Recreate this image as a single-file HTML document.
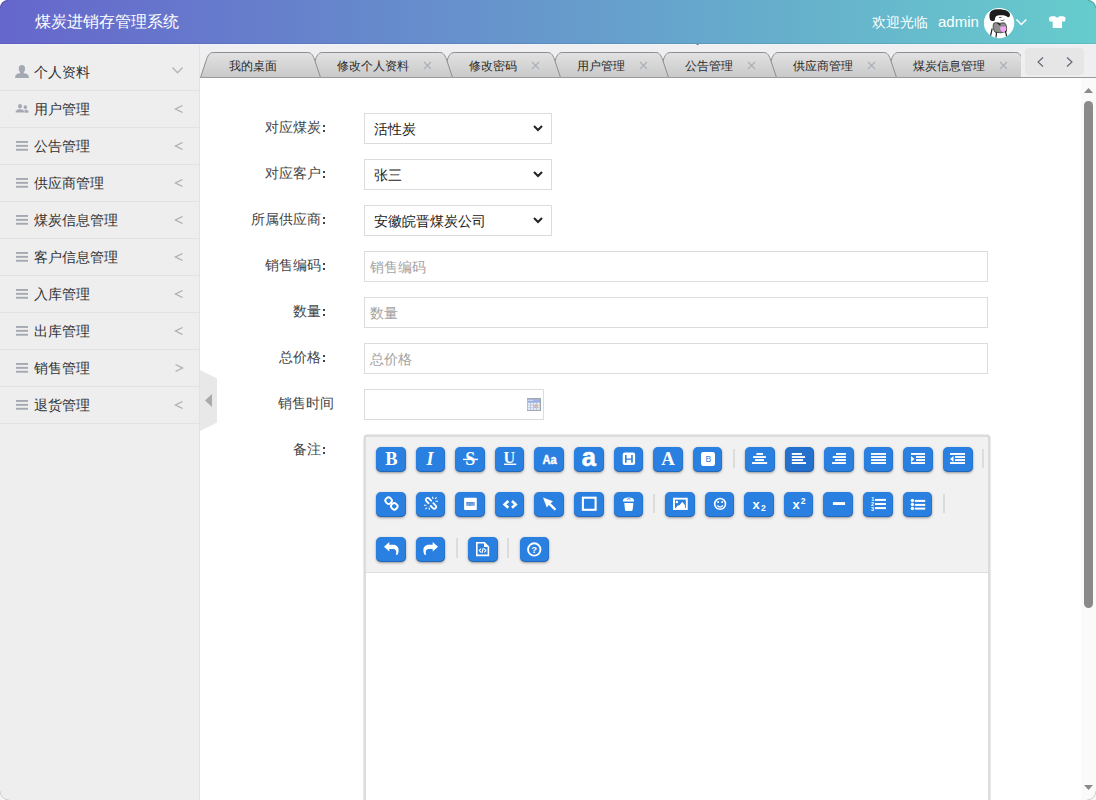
<!DOCTYPE html><html><head><meta charset="utf-8"><style>
*{margin:0;padding:0;box-sizing:border-box}
html,body{width:1096px;height:800px;overflow:hidden;background:#fff;font-family:"Liberation Sans",sans-serif}
.a{position:absolute;white-space:nowrap;line-height:1}
svg{position:absolute;overflow:visible}
</style></head><body>
<div class="a" style="left:0;top:0;width:1096px;height:44px;background:linear-gradient(to right,#6666cc,#66cccc);border-radius:8px 8px 0 0"></div>
<div class="a" style="left:35px;top:14px;font-size:16px;color:#fff">煤炭进销存管理系统</div>
<div class="a" style="left:872px;top:15px;font-size:14px;color:#fff">欢迎光临</div>
<div class="a" style="left:938px;top:14px;font-size:15px;color:#fff">admin</div>
<svg style="left:984px;top:8px" width="30" height="30" viewBox="0 0 30 30"><circle cx="15.1" cy="15.1" r="15.2" fill="#fff"/><path d="M6 11.5 C4.5 6 6 1.5 13 1.3 C20 1 26.5 3 26 7.5 C25.8 9 24.5 9.5 23.5 9 C22.5 7.5 19 7 15 7.3 C12 7.5 11 9 10.8 12 C10.5 13.5 7 13.5 6 11.5 Z" fill="#1c1c1c"/><path d="M15 9.6 L17.6 9.3 M16.6 12.2 C18 12.9 19.3 12.6 20.3 11.6" stroke="#444" stroke-width="0.9" fill="none"/><path d="M9.8 15.2 C11 14.4 13 14.6 14.8 15.3 L20.5 14.8 C22.3 16.2 23 19.5 22.4 23.4 L17 24.8 L11 24.2 C9 21.2 8.6 17.6 9.8 15.2 Z" fill="#8e8e8e" stroke="#222" stroke-width="0.7"/><path d="M16.4 18.6 C18.4 19.1 20.6 18 21.9 19.1 C22.6 21.1 22.1 23.6 20.5 24.1 C18.5 24.4 16.8 23.4 16.2 21.1 Z" fill="#f2a4f2"/><path d="M8.2 20.5 L6.6 27.6 M12.6 24.3 L12 29.5 M21.4 23 L22.6 28.2 M13.5 14.8 L16.5 17.2" stroke="#1c1c1c" stroke-width="1.2" fill="none"/></svg>
<svg style="left:1016px;top:18.8px" width="11" height="6.5" viewBox="0 0 11 6.5"><path d="M0.5 0.5 L5.3 5.5 L10.3 0.5" fill="none" stroke="#fff" stroke-width="1.5"/></svg>
<svg style="left:0;top:0" width="1096" height="44" viewBox="0 0 1096 44"><path d="M1048.8 18.5 Q1049 16.8 1051.5 16.3 L1055 16.3 Q1057.2 18.8 1059.4 16.3 L1063 16.3 Q1065.6 16.8 1065.6 18.5 L1065 21.4 L1062 21.4 L1062 28 L1052.7 28 L1052.7 21.4 L1049.5 21.4 Z" fill="#fff"/></svg>
<div class="a" style="left:0;top:44px;width:199px;height:756px;background:#eeeeee"></div>
<div class="a" style="left:199px;top:44px;width:1px;height:756px;background:#e2e2e2"></div>
<div class="a" style="left:0;top:90px;width:199px;height:1px;background:#e2e2e2"></div>
<div class="a" style="left:34px;top:65px;font-size:14px;color:#333">个人资料</div>
<svg style="left:0;top:0" width="40" height="90" viewBox="0 0 40 90"><ellipse cx="21.9" cy="68.7" rx="3.15" ry="3.75" fill="#a3a8b2"/><rect x="20" y="71" width="3.8" height="2.8" fill="#a3a8b2"/><path d="M15.2 78.1 L15.2 76.8 Q15.4 73.9 19.2 73.3 L24.6 73.3 Q28.6 73.9 28.8 76.8 L28.8 78.1 Z" fill="#a3a8b2"/></svg>
<svg style="left:172px;top:67px" width="11" height="7" viewBox="0 0 11 7"><path d="M0.5 0.5 L5.5 5.8 L10.5 0.5" fill="none" stroke="#b4b4b4" stroke-width="1.3"/></svg>
<div class="a" style="left:0;top:127px;width:199px;height:1px;background:#e2e2e2"></div>
<div class="a" style="left:34px;top:102px;font-size:14px;color:#333">用户管理</div>
<svg style="left:0;top:0" width="40" height="120" viewBox="0 0 40 120"><ellipse cx="25.3" cy="107.1" rx="1.75" ry="1.95" fill="#a3a8b2"/><path d="M24.2 112.8 L24.2 111.3 Q24.5 109.6 25.3 109.4 Q27.9 109.6 28.3 111.3 L28.3 112.8 Z" fill="#a3a8b2"/><ellipse cx="20" cy="106.2" rx="2" ry="2.3" fill="#eeeeee" stroke="#eeeeee" stroke-width="0.8"/><ellipse cx="20" cy="106.2" rx="1.95" ry="2.25" fill="#a3a8b2"/><path d="M15.6 112.8 L15.6 111.5 Q15.8 109.4 19 109.1 L21 109.1 Q24.2 109.4 24.4 111.5 L24.4 112.8 Z" fill="#a3a8b2" stroke="#eeeeee" stroke-width="0.5"/></svg>
<svg style="left:175px;top:105px" width="8" height="8" viewBox="0 0 8 8"><path d="M7.5 0.5 L0.5 4 L7.5 7.5" fill="none" stroke="#adadad" stroke-width="1.35"/></svg>
<div class="a" style="left:0;top:164px;width:199px;height:1px;background:#e2e2e2"></div>
<div class="a" style="left:34px;top:139px;font-size:14px;color:#333">公告管理</div>
<svg style="left:16px;top:141px" width="12" height="10" viewBox="0 0 12 10"><rect x="0" y="0" width="12" height="1.9" fill="#a3a8b2"/><rect x="0" y="3.9" width="12" height="1.9" fill="#a3a8b2"/><rect x="0" y="7.8" width="12" height="1.9" fill="#a3a8b2"/></svg>
<svg style="left:175px;top:142px" width="8" height="8" viewBox="0 0 8 8"><path d="M7.5 0.5 L0.5 4 L7.5 7.5" fill="none" stroke="#adadad" stroke-width="1.35"/></svg>
<div class="a" style="left:0;top:201px;width:199px;height:1px;background:#e2e2e2"></div>
<div class="a" style="left:34px;top:176px;font-size:14px;color:#333">供应商管理</div>
<svg style="left:16px;top:178px" width="12" height="10" viewBox="0 0 12 10"><rect x="0" y="0" width="12" height="1.9" fill="#a3a8b2"/><rect x="0" y="3.9" width="12" height="1.9" fill="#a3a8b2"/><rect x="0" y="7.8" width="12" height="1.9" fill="#a3a8b2"/></svg>
<svg style="left:175px;top:179px" width="8" height="8" viewBox="0 0 8 8"><path d="M7.5 0.5 L0.5 4 L7.5 7.5" fill="none" stroke="#adadad" stroke-width="1.35"/></svg>
<div class="a" style="left:0;top:238px;width:199px;height:1px;background:#e2e2e2"></div>
<div class="a" style="left:34px;top:213px;font-size:14px;color:#333">煤炭信息管理</div>
<svg style="left:16px;top:215px" width="12" height="10" viewBox="0 0 12 10"><rect x="0" y="0" width="12" height="1.9" fill="#a3a8b2"/><rect x="0" y="3.9" width="12" height="1.9" fill="#a3a8b2"/><rect x="0" y="7.8" width="12" height="1.9" fill="#a3a8b2"/></svg>
<svg style="left:175px;top:216px" width="8" height="8" viewBox="0 0 8 8"><path d="M7.5 0.5 L0.5 4 L7.5 7.5" fill="none" stroke="#adadad" stroke-width="1.35"/></svg>
<div class="a" style="left:0;top:275px;width:199px;height:1px;background:#e2e2e2"></div>
<div class="a" style="left:34px;top:250px;font-size:14px;color:#333">客户信息管理</div>
<svg style="left:16px;top:252px" width="12" height="10" viewBox="0 0 12 10"><rect x="0" y="0" width="12" height="1.9" fill="#a3a8b2"/><rect x="0" y="3.9" width="12" height="1.9" fill="#a3a8b2"/><rect x="0" y="7.8" width="12" height="1.9" fill="#a3a8b2"/></svg>
<svg style="left:175px;top:253px" width="8" height="8" viewBox="0 0 8 8"><path d="M7.5 0.5 L0.5 4 L7.5 7.5" fill="none" stroke="#adadad" stroke-width="1.35"/></svg>
<div class="a" style="left:0;top:312px;width:199px;height:1px;background:#e2e2e2"></div>
<div class="a" style="left:34px;top:287px;font-size:14px;color:#333">入库管理</div>
<svg style="left:16px;top:289px" width="12" height="10" viewBox="0 0 12 10"><rect x="0" y="0" width="12" height="1.9" fill="#a3a8b2"/><rect x="0" y="3.9" width="12" height="1.9" fill="#a3a8b2"/><rect x="0" y="7.8" width="12" height="1.9" fill="#a3a8b2"/></svg>
<svg style="left:175px;top:290px" width="8" height="8" viewBox="0 0 8 8"><path d="M7.5 0.5 L0.5 4 L7.5 7.5" fill="none" stroke="#adadad" stroke-width="1.35"/></svg>
<div class="a" style="left:0;top:349px;width:199px;height:1px;background:#e2e2e2"></div>
<div class="a" style="left:34px;top:324px;font-size:14px;color:#333">出库管理</div>
<svg style="left:16px;top:326px" width="12" height="10" viewBox="0 0 12 10"><rect x="0" y="0" width="12" height="1.9" fill="#a3a8b2"/><rect x="0" y="3.9" width="12" height="1.9" fill="#a3a8b2"/><rect x="0" y="7.8" width="12" height="1.9" fill="#a3a8b2"/></svg>
<svg style="left:175px;top:327px" width="8" height="8" viewBox="0 0 8 8"><path d="M7.5 0.5 L0.5 4 L7.5 7.5" fill="none" stroke="#adadad" stroke-width="1.35"/></svg>
<div class="a" style="left:0;top:386px;width:199px;height:1px;background:#e2e2e2"></div>
<div class="a" style="left:34px;top:361px;font-size:14px;color:#333">销售管理</div>
<svg style="left:16px;top:363px" width="12" height="10" viewBox="0 0 12 10"><rect x="0" y="0" width="12" height="1.9" fill="#a3a8b2"/><rect x="0" y="3.9" width="12" height="1.9" fill="#a3a8b2"/><rect x="0" y="7.8" width="12" height="1.9" fill="#a3a8b2"/></svg>
<svg style="left:175px;top:364px" width="8" height="8" viewBox="0 0 8 8"><path d="M0.5 0.5 L7.5 4 L0.5 7.5" fill="none" stroke="#adadad" stroke-width="1.35"/></svg>
<div class="a" style="left:0;top:423px;width:199px;height:1px;background:#e2e2e2"></div>
<div class="a" style="left:34px;top:398px;font-size:14px;color:#333">退货管理</div>
<svg style="left:16px;top:400px" width="12" height="10" viewBox="0 0 12 10"><rect x="0" y="0" width="12" height="1.9" fill="#a3a8b2"/><rect x="0" y="3.9" width="12" height="1.9" fill="#a3a8b2"/><rect x="0" y="7.8" width="12" height="1.9" fill="#a3a8b2"/></svg>
<svg style="left:175px;top:401px" width="8" height="8" viewBox="0 0 8 8"><path d="M7.5 0.5 L0.5 4 L7.5 7.5" fill="none" stroke="#adadad" stroke-width="1.35"/></svg>
<div class="a" style="left:200px;top:44px;width:896px;height:34px;background:#efeff1"></div>
<div class="a" style="left:0;top:43px;width:1096px;height:1px;background:rgba(30,30,60,.1)"></div>
<div class="a" style="left:0;top:44px;width:1096px;height:1px;background:#eef3fc"></div>
<svg style="left:0;top:0" width="1096" height="100" viewBox="0 0 1096 100"><defs><linearGradient id="tg" x1="0" y1="0" x2="0" y2="1"><stop offset="0" stop-color="#e2e2e2"/><stop offset="1" stop-color="#c9c9c9"/></linearGradient><clipPath id="tc"><rect x="200" y="40" width="821" height="40"/></clipPath></defs><g clip-path="url(#tc)"><path d="M885.5 77.5 L891 61 C892.6 55.6 894.6 52.5 898.2 52.5 L1015.8 52.5 C1019.4 52.5 1021.4 55.6 1023 61 L1028.5 77.5 Z" fill="url(#tg)" stroke="#8e8e8e" stroke-width="1"/><path d="M765.5 77.5 L771 61 C772.6 55.6 774.6 52.5 778.2 52.5 L883.8 52.5 C887.4 52.5 889.4 55.6 891 61 L896.5 77.5 Z" fill="url(#tg)" stroke="#8e8e8e" stroke-width="1"/><path d="M657.5 77.5 L663 61 C664.6 55.6 666.6 52.5 670.2 52.5 L763.8 52.5 C767.4 52.5 769.4 55.6 771 61 L776.5 77.5 Z" fill="url(#tg)" stroke="#8e8e8e" stroke-width="1"/><path d="M549.5 77.5 L555 61 C556.6 55.6 558.6 52.5 562.2 52.5 L655.8 52.5 C659.4 52.5 661.4 55.6 663 61 L668.5 77.5 Z" fill="url(#tg)" stroke="#8e8e8e" stroke-width="1"/><path d="M441.5 77.5 L447 61 C448.6 55.6 450.6 52.5 454.2 52.5 L547.8 52.5 C551.4 52.5 553.4 55.6 555 61 L560.5 77.5 Z" fill="url(#tg)" stroke="#8e8e8e" stroke-width="1"/><path d="M309.5 77.5 L315 61 C316.6 55.6 318.6 52.5 322.2 52.5 L439.8 52.5 C443.4 52.5 445.4 55.6 447 61 L452.5 77.5 Z" fill="url(#tg)" stroke="#8e8e8e" stroke-width="1"/><path d="M200.5 77.5 L206 61 C207.6 55.6 209.6 52.5 213.2 52.5 L307.8 52.5 C311.4 52.5 313.4 55.6 315 61 L320.5 77.5 Z" fill="url(#tg)" stroke="#8e8e8e" stroke-width="1"/></g></svg>
<div class="a" style="left:200px;top:77px;width:896px;height:1px;background:#9a9a9a"></div>
<svg style="left:694px;top:43px" width="7" height="4" viewBox="0 0 7 4"><path d="M2 1 L5.2 1 L3.6 2.3 Z" fill="#5d7c92"/></svg>
<div class="a" style="left:229px;top:59.5px;font-size:12px;color:#2a2a2a">我的桌面</div>
<div class="a" style="left:337px;top:59.5px;font-size:12px;color:#2a2a2a">修改个人资料</div>
<svg style="left:424px;top:62px" width="7" height="7" viewBox="0 0 7 7"><path d="M0 0 L7 7 M7 0 L0 7" stroke="#abb0b8" stroke-width="1.15"/></svg>
<div class="a" style="left:469px;top:59.5px;font-size:12px;color:#2a2a2a">修改密码</div>
<svg style="left:532px;top:62px" width="7" height="7" viewBox="0 0 7 7"><path d="M0 0 L7 7 M7 0 L0 7" stroke="#abb0b8" stroke-width="1.15"/></svg>
<div class="a" style="left:577px;top:59.5px;font-size:12px;color:#2a2a2a">用户管理</div>
<svg style="left:640px;top:62px" width="7" height="7" viewBox="0 0 7 7"><path d="M0 0 L7 7 M7 0 L0 7" stroke="#abb0b8" stroke-width="1.15"/></svg>
<div class="a" style="left:685px;top:59.5px;font-size:12px;color:#2a2a2a">公告管理</div>
<svg style="left:748px;top:62px" width="7" height="7" viewBox="0 0 7 7"><path d="M0 0 L7 7 M7 0 L0 7" stroke="#abb0b8" stroke-width="1.15"/></svg>
<div class="a" style="left:793px;top:59.5px;font-size:12px;color:#2a2a2a">供应商管理</div>
<svg style="left:868px;top:62px" width="7" height="7" viewBox="0 0 7 7"><path d="M0 0 L7 7 M7 0 L0 7" stroke="#abb0b8" stroke-width="1.15"/></svg>
<div class="a" style="left:913px;top:59.5px;font-size:12px;color:#2a2a2a">煤炭信息管理</div>
<svg style="left:1000px;top:62px" width="7" height="7" viewBox="0 0 7 7"><path d="M0 0 L7 7 M7 0 L0 7" stroke="#abb0b8" stroke-width="1.15"/></svg>
<div class="a" style="left:1025px;top:48px;width:59px;height:27px;background:#e6e6e6;border-radius:4px"></div>
<svg style="left:1037px;top:57px" width="7" height="10" viewBox="0 0 7 10"><path d="M6 0.5 L1 5 L6 9.5" fill="none" stroke="#5f6470" stroke-width="1.1"/></svg>
<svg style="left:1066px;top:57px" width="7" height="10" viewBox="0 0 7 10"><path d="M1 0.5 L6 5 L1 9.5" fill="none" stroke="#5f6470" stroke-width="1.1"/></svg>
<svg style="left:200px;top:370px" width="18" height="62" viewBox="0 0 18 62"><path d="M0 0 L17 8.5 L17 52.5 L0 61Z" fill="#e8e8e8"/><path d="M12 24 L5 30.5 L12 37Z" fill="#aaa"/></svg>
<div class="a" style="right:775.5px;top:120px;font-size:14px;color:#444">对应煤炭</div>
<div class="a" style="left:322.6px;top:124.6px;width:2.4px;height:2.2px;background:#444"></div>
<div class="a" style="left:322.6px;top:130px;width:2.4px;height:2.2px;background:#444"></div>
<div class="a" style="right:775.5px;top:166px;font-size:14px;color:#444">对应客户</div>
<div class="a" style="left:322.6px;top:170.6px;width:2.4px;height:2.2px;background:#444"></div>
<div class="a" style="left:322.6px;top:176px;width:2.4px;height:2.2px;background:#444"></div>
<div class="a" style="right:775.5px;top:212px;font-size:14px;color:#444">所属供应商</div>
<div class="a" style="left:322.6px;top:216.6px;width:2.4px;height:2.2px;background:#444"></div>
<div class="a" style="left:322.6px;top:222px;width:2.4px;height:2.2px;background:#444"></div>
<div class="a" style="right:775.5px;top:258px;font-size:14px;color:#444">销售编码</div>
<div class="a" style="left:322.6px;top:262.6px;width:2.4px;height:2.2px;background:#444"></div>
<div class="a" style="left:322.6px;top:268px;width:2.4px;height:2.2px;background:#444"></div>
<div class="a" style="right:775.5px;top:304px;font-size:14px;color:#444">数量</div>
<div class="a" style="left:322.6px;top:308.6px;width:2.4px;height:2.2px;background:#444"></div>
<div class="a" style="left:322.6px;top:314px;width:2.4px;height:2.2px;background:#444"></div>
<div class="a" style="right:775.5px;top:350px;font-size:14px;color:#444">总价格</div>
<div class="a" style="left:322.6px;top:354.6px;width:2.4px;height:2.2px;background:#444"></div>
<div class="a" style="left:322.6px;top:360px;width:2.4px;height:2.2px;background:#444"></div>
<div class="a" style="right:762px;top:396px;font-size:14px;color:#444">销售时间</div>
<div class="a" style="right:775.5px;top:442px;font-size:14px;color:#444">备注</div>
<div class="a" style="left:322.6px;top:446.6px;width:2.4px;height:2.2px;background:#444"></div>
<div class="a" style="left:322.6px;top:452px;width:2.4px;height:2.2px;background:#444"></div>
<div class="a" style="left:364px;top:113px;width:188px;height:31px;border:1px solid #dcdcdc;background:#fff"></div>
<div class="a" style="left:374px;top:122px;font-size:14px;color:#222">活性炭</div>
<svg style="left:533px;top:125px" width="10" height="6" viewBox="0 0 10 6"><path d="M1 1 L5 5 L9 1" fill="none" stroke="#222" stroke-width="2"/></svg>
<div class="a" style="left:364px;top:159px;width:188px;height:31px;border:1px solid #dcdcdc;background:#fff"></div>
<div class="a" style="left:374px;top:168px;font-size:14px;color:#222">张三</div>
<svg style="left:533px;top:171px" width="10" height="6" viewBox="0 0 10 6"><path d="M1 1 L5 5 L9 1" fill="none" stroke="#222" stroke-width="2"/></svg>
<div class="a" style="left:364px;top:205px;width:188px;height:31px;border:1px solid #dcdcdc;background:#fff"></div>
<div class="a" style="left:374px;top:214px;font-size:14px;color:#222">安徽皖晋煤炭公司</div>
<svg style="left:533px;top:217px" width="10" height="6" viewBox="0 0 10 6"><path d="M1 1 L5 5 L9 1" fill="none" stroke="#222" stroke-width="2"/></svg>
<div class="a" style="left:364px;top:251px;width:624px;height:31px;border:1px solid #dcdcdc;background:#fff"></div>
<div class="a" style="left:370px;top:260px;font-size:14px;color:#a3a3a3">销售编码</div>
<div class="a" style="left:364px;top:297px;width:624px;height:31px;border:1px solid #dcdcdc;background:#fff"></div>
<div class="a" style="left:370px;top:306px;font-size:14px;color:#a3a3a3">数量</div>
<div class="a" style="left:364px;top:343px;width:624px;height:31px;border:1px solid #dcdcdc;background:#fff"></div>
<div class="a" style="left:370px;top:352px;font-size:14px;color:#a3a3a3">总价格</div>
<div class="a" style="left:364px;top:389px;width:180px;height:31px;border:1px solid #dcdcdc;background:#fff"></div>
<svg style="left:0;top:0" width="1096" height="800" viewBox="0 0 1096 800"><rect x="527" y="398" width="14" height="12.8" fill="#b4c0d8"/><rect x="527" y="398" width="14" height="1.5" fill="#a3a7ae"/><rect x="527.3" y="399.5" width="13.4" height="2.8" fill="#9cb3e6"/><rect x="527.6" y="399.8" width="5.5" height="1.2" fill="#c4d4f4"/><g fill="#edf2fa"><rect x="528" y="403" width="2.2" height="1.6"/><rect x="531" y="403" width="2.2" height="1.6"/><rect x="534" y="403" width="2.2" height="1.6"/><rect x="537" y="403" width="2.6" height="1.6"/><rect x="528" y="405.5" width="2.2" height="1.8"/><rect x="531" y="405.5" width="2.2" height="1.8"/><rect x="537.8" y="405.5" width="1.8" height="1.8"/><rect x="528" y="408.2" width="2.2" height="1.6"/><rect x="531" y="408.2" width="2.2" height="1.6"/><rect x="534" y="408.2" width="2.2" height="1.6"/><rect x="537" y="408.2" width="2.6" height="1.6"/></g><circle cx="536.2" cy="405.8" r="1.7" fill="#eab2a2"/><rect x="527" y="410" width="14" height="0.8" fill="#9aa0aa"/><rect x="540.2" y="399.5" width="0.8" height="11.3" fill="#9aa0aa"/></svg>
<div class="a" style="left:364px;top:435px;width:626px;height:380px;border:2px solid #dcdcdc;border-radius:4px;box-shadow:0 0 1.5px rgba(0,0,0,.42);background:#fff;overflow:hidden"><div style="position:absolute;left:0;top:0;width:100%;height:136px;background:#f1f1f1;border-bottom:1px solid #dddddd"></div></div>
<div class="a" style="left:376.0px;top:447px;width:29.6px;height:24.5px;background:#2a80e0;border-radius:5px;box-shadow:inset 0 -1px 0 rgba(0,20,60,.22),inset -1px 0 0 rgba(0,20,60,.1),0 1px 2.5px rgba(0,0,0,.38)"></div>
<div class="a" style="left:415.6px;top:447px;width:29.6px;height:24.5px;background:#2a80e0;border-radius:5px;box-shadow:inset 0 -1px 0 rgba(0,20,60,.22),inset -1px 0 0 rgba(0,20,60,.1),0 1px 2.5px rgba(0,0,0,.38)"></div>
<div class="a" style="left:455.2px;top:447px;width:29.6px;height:24.5px;background:#2a80e0;border-radius:5px;box-shadow:inset 0 -1px 0 rgba(0,20,60,.22),inset -1px 0 0 rgba(0,20,60,.1),0 1px 2.5px rgba(0,0,0,.38)"></div>
<div class="a" style="left:494.8px;top:447px;width:29.6px;height:24.5px;background:#2a80e0;border-radius:5px;box-shadow:inset 0 -1px 0 rgba(0,20,60,.22),inset -1px 0 0 rgba(0,20,60,.1),0 1px 2.5px rgba(0,0,0,.38)"></div>
<div class="a" style="left:534.4px;top:447px;width:29.6px;height:24.5px;background:#2a80e0;border-radius:5px;box-shadow:inset 0 -1px 0 rgba(0,20,60,.22),inset -1px 0 0 rgba(0,20,60,.1),0 1px 2.5px rgba(0,0,0,.38)"></div>
<div class="a" style="left:574.0px;top:447px;width:29.6px;height:24.5px;background:#2a80e0;border-radius:5px;box-shadow:inset 0 -1px 0 rgba(0,20,60,.22),inset -1px 0 0 rgba(0,20,60,.1),0 1px 2.5px rgba(0,0,0,.38)"></div>
<div class="a" style="left:613.6px;top:447px;width:29.6px;height:24.5px;background:#2a80e0;border-radius:5px;box-shadow:inset 0 -1px 0 rgba(0,20,60,.22),inset -1px 0 0 rgba(0,20,60,.1),0 1px 2.5px rgba(0,0,0,.38)"></div>
<div class="a" style="left:653.2px;top:447px;width:29.6px;height:24.5px;background:#2a80e0;border-radius:5px;box-shadow:inset 0 -1px 0 rgba(0,20,60,.22),inset -1px 0 0 rgba(0,20,60,.1),0 1px 2.5px rgba(0,0,0,.38)"></div>
<div class="a" style="left:692.8px;top:447px;width:29.6px;height:24.5px;background:#2a80e0;border-radius:5px;box-shadow:inset 0 -1px 0 rgba(0,20,60,.22),inset -1px 0 0 rgba(0,20,60,.1),0 1px 2.5px rgba(0,0,0,.38)"></div>
<div class="a" style="left:745.0px;top:447px;width:29.6px;height:24.5px;background:#2a80e0;border-radius:5px;box-shadow:inset 0 -1px 0 rgba(0,20,60,.22),inset -1px 0 0 rgba(0,20,60,.1),0 1px 2.5px rgba(0,0,0,.38)"></div>
<div class="a" style="left:784.6px;top:447px;width:29.6px;height:24.5px;background:#2470cc;border-radius:5px;box-shadow:inset 0 -1px 0 rgba(0,20,60,.22),inset -1px 0 0 rgba(0,20,60,.1),0 1px 2.5px rgba(0,0,0,.38)"></div>
<div class="a" style="left:824.2px;top:447px;width:29.6px;height:24.5px;background:#2a80e0;border-radius:5px;box-shadow:inset 0 -1px 0 rgba(0,20,60,.22),inset -1px 0 0 rgba(0,20,60,.1),0 1px 2.5px rgba(0,0,0,.38)"></div>
<div class="a" style="left:863.8px;top:447px;width:29.6px;height:24.5px;background:#2a80e0;border-radius:5px;box-shadow:inset 0 -1px 0 rgba(0,20,60,.22),inset -1px 0 0 rgba(0,20,60,.1),0 1px 2.5px rgba(0,0,0,.38)"></div>
<div class="a" style="left:903.4px;top:447px;width:29.6px;height:24.5px;background:#2a80e0;border-radius:5px;box-shadow:inset 0 -1px 0 rgba(0,20,60,.22),inset -1px 0 0 rgba(0,20,60,.1),0 1px 2.5px rgba(0,0,0,.38)"></div>
<div class="a" style="left:943.0px;top:447px;width:29.6px;height:24.5px;background:#2a80e0;border-radius:5px;box-shadow:inset 0 -1px 0 rgba(0,20,60,.22),inset -1px 0 0 rgba(0,20,60,.1),0 1px 2.5px rgba(0,0,0,.38)"></div>
<div class="a" style="left:732.5px;top:448.5px;width:2px;height:19.5px;background:#dcdcdc"></div>
<div class="a" style="left:981.5px;top:448.5px;width:2px;height:19.5px;background:#dcdcdc"></div>
<div class="a" style="left:376.0px;top:492px;width:29.6px;height:24.5px;background:#2a80e0;border-radius:5px;box-shadow:inset 0 -1px 0 rgba(0,20,60,.22),inset -1px 0 0 rgba(0,20,60,.1),0 1px 2.5px rgba(0,0,0,.38)"></div>
<div class="a" style="left:415.6px;top:492px;width:29.6px;height:24.5px;background:#2a80e0;border-radius:5px;box-shadow:inset 0 -1px 0 rgba(0,20,60,.22),inset -1px 0 0 rgba(0,20,60,.1),0 1px 2.5px rgba(0,0,0,.38)"></div>
<div class="a" style="left:455.2px;top:492px;width:29.6px;height:24.5px;background:#2a80e0;border-radius:5px;box-shadow:inset 0 -1px 0 rgba(0,20,60,.22),inset -1px 0 0 rgba(0,20,60,.1),0 1px 2.5px rgba(0,0,0,.38)"></div>
<div class="a" style="left:494.8px;top:492px;width:29.6px;height:24.5px;background:#2a80e0;border-radius:5px;box-shadow:inset 0 -1px 0 rgba(0,20,60,.22),inset -1px 0 0 rgba(0,20,60,.1),0 1px 2.5px rgba(0,0,0,.38)"></div>
<div class="a" style="left:534.4px;top:492px;width:29.6px;height:24.5px;background:#2a80e0;border-radius:5px;box-shadow:inset 0 -1px 0 rgba(0,20,60,.22),inset -1px 0 0 rgba(0,20,60,.1),0 1px 2.5px rgba(0,0,0,.38)"></div>
<div class="a" style="left:574.0px;top:492px;width:29.6px;height:24.5px;background:#2a80e0;border-radius:5px;box-shadow:inset 0 -1px 0 rgba(0,20,60,.22),inset -1px 0 0 rgba(0,20,60,.1),0 1px 2.5px rgba(0,0,0,.38)"></div>
<div class="a" style="left:613.6px;top:492px;width:29.6px;height:24.5px;background:#2a80e0;border-radius:5px;box-shadow:inset 0 -1px 0 rgba(0,20,60,.22),inset -1px 0 0 rgba(0,20,60,.1),0 1px 2.5px rgba(0,0,0,.38)"></div>
<div class="a" style="left:665.0px;top:492px;width:29.6px;height:24.5px;background:#2a80e0;border-radius:5px;box-shadow:inset 0 -1px 0 rgba(0,20,60,.22),inset -1px 0 0 rgba(0,20,60,.1),0 1px 2.5px rgba(0,0,0,.38)"></div>
<div class="a" style="left:704.6px;top:492px;width:29.6px;height:24.5px;background:#2a80e0;border-radius:5px;box-shadow:inset 0 -1px 0 rgba(0,20,60,.22),inset -1px 0 0 rgba(0,20,60,.1),0 1px 2.5px rgba(0,0,0,.38)"></div>
<div class="a" style="left:744.2px;top:492px;width:29.6px;height:24.5px;background:#2a80e0;border-radius:5px;box-shadow:inset 0 -1px 0 rgba(0,20,60,.22),inset -1px 0 0 rgba(0,20,60,.1),0 1px 2.5px rgba(0,0,0,.38)"></div>
<div class="a" style="left:783.8px;top:492px;width:29.6px;height:24.5px;background:#2a80e0;border-radius:5px;box-shadow:inset 0 -1px 0 rgba(0,20,60,.22),inset -1px 0 0 rgba(0,20,60,.1),0 1px 2.5px rgba(0,0,0,.38)"></div>
<div class="a" style="left:823.4px;top:492px;width:29.6px;height:24.5px;background:#2a80e0;border-radius:5px;box-shadow:inset 0 -1px 0 rgba(0,20,60,.22),inset -1px 0 0 rgba(0,20,60,.1),0 1px 2.5px rgba(0,0,0,.38)"></div>
<div class="a" style="left:863.0px;top:492px;width:29.6px;height:24.5px;background:#2a80e0;border-radius:5px;box-shadow:inset 0 -1px 0 rgba(0,20,60,.22),inset -1px 0 0 rgba(0,20,60,.1),0 1px 2.5px rgba(0,0,0,.38)"></div>
<div class="a" style="left:902.6px;top:492px;width:29.6px;height:24.5px;background:#2a80e0;border-radius:5px;box-shadow:inset 0 -1px 0 rgba(0,20,60,.22),inset -1px 0 0 rgba(0,20,60,.1),0 1px 2.5px rgba(0,0,0,.38)"></div>
<div class="a" style="left:652.6px;top:493.5px;width:2px;height:19.5px;background:#dcdcdc"></div>
<div class="a" style="left:943px;top:493.5px;width:2px;height:19.5px;background:#dcdcdc"></div>
<div class="a" style="left:376px;top:537px;width:29.6px;height:24.5px;background:#2a80e0;border-radius:5px;box-shadow:inset 0 -1px 0 rgba(0,20,60,.22),inset -1px 0 0 rgba(0,20,60,.1),0 1px 2.5px rgba(0,0,0,.38)"></div>
<div class="a" style="left:415.6px;top:537px;width:29.6px;height:24.5px;background:#2a80e0;border-radius:5px;box-shadow:inset 0 -1px 0 rgba(0,20,60,.22),inset -1px 0 0 rgba(0,20,60,.1),0 1px 2.5px rgba(0,0,0,.38)"></div>
<div class="a" style="left:468px;top:537px;width:29.6px;height:24.5px;background:#2a80e0;border-radius:5px;box-shadow:inset 0 -1px 0 rgba(0,20,60,.22),inset -1px 0 0 rgba(0,20,60,.1),0 1px 2.5px rgba(0,0,0,.38)"></div>
<div class="a" style="left:519.6px;top:537px;width:29.6px;height:24.5px;background:#2a80e0;border-radius:5px;box-shadow:inset 0 -1px 0 rgba(0,20,60,.22),inset -1px 0 0 rgba(0,20,60,.1),0 1px 2.5px rgba(0,0,0,.38)"></div>
<div class="a" style="left:456px;top:538.3px;width:2px;height:20.200000000000045px;background:#dcdcdc"></div>
<div class="a" style="left:507px;top:538.3px;width:2px;height:20.200000000000045px;background:#dcdcdc"></div>
<svg style="left:0;top:0" width="1096" height="800" viewBox="0 0 1096 800"><text x="385.3" y="465.2" font-family="Liberation Serif" font-size="18.5" font-weight="bold" font-style="normal" fill="#ffffff" >B</text><text x="426.5" y="465.2" font-family="Liberation Serif" font-size="18" font-weight="bold" font-style="italic" fill="#ffffff" >I</text><text x="465.3" y="465" font-family="Liberation Serif" font-size="18" font-weight="bold" font-style="normal" fill="#ffffff" >S</text><rect x="463" y="458.7" width="15" height="1.4" fill="#ffffff"/><text x="503.5" y="463.2" font-family="Liberation Serif" font-size="16" font-weight="bold" font-style="normal" fill="#ffffff" >U</text><rect x="504" y="463.6" width="12.2" height="1.4" fill="#ffffff"/><text x="542.5" y="463.6" font-family="Liberation Sans" font-size="13.6" font-weight="bold" font-style="normal" fill="#ffffff" textLength="14.2" lengthAdjust="spacingAndGlyphs" stroke="#fff" stroke-width="0.45">Aa</text><text x="581.8" y="465.6" font-family="Liberation Sans" font-size="25.5" font-weight="bold" font-style="normal" fill="#ffffff" stroke="#fff" stroke-width="0.5">a</text><rect x="622.7" y="452.6" width="12.4" height="12.4" rx="2" fill="#ffffff"/><path d="M625 455 h1.6 v3.4 h4.6 v-3.4 h1.6 v7.8 h-1.6 v-3.1 h-4.6 v3.1 h-1.6 z" fill="#2a80e0"/><text x="661.3" y="465.2" font-family="Liberation Serif" font-size="18.7" font-weight="bold" font-style="normal" fill="#ffffff" >A</text><rect x="701" y="452" width="14" height="13.9" rx="2.2" fill="#ffffff"/><text x="705.5" y="462.3" font-family="Liberation Sans" font-size="8.6" font-weight="normal" font-style="normal" fill="#2a80e0" >B</text><rect x="756.4" y="453" width="6.600000000000023" height="1.9" fill="#ffffff"/><rect x="753.1" y="456.1" width="12.799999999999955" height="1.9" fill="#ffffff"/><rect x="755" y="459.1" width="9" height="1.9" fill="#ffffff"/><rect x="752" y="462.1" width="15.200000000000045" height="1.9" fill="#ffffff"/><rect x="791.8" y="453" width="10.200000000000045" height="1.9" fill="#ffffff"/><rect x="791.8" y="456.1" width="13.200000000000045" height="1.9" fill="#ffffff"/><rect x="791.8" y="459.1" width="11.300000000000068" height="1.9" fill="#ffffff"/><rect x="791.8" y="462.1" width="14.200000000000045" height="1.9" fill="#ffffff"/><rect x="836" y="453" width="9.899999999999977" height="1.9" fill="#ffffff"/><rect x="832.8" y="456.1" width="13.100000000000023" height="1.9" fill="#ffffff"/><rect x="835" y="459.1" width="10.899999999999977" height="1.9" fill="#ffffff"/><rect x="832" y="462.1" width="13.899999999999977" height="1.9" fill="#ffffff"/><rect x="871" y="453" width="15" height="1.9" fill="#ffffff"/><rect x="871" y="456.1" width="15" height="1.9" fill="#ffffff"/><rect x="871" y="459.1" width="15" height="1.9" fill="#ffffff"/><rect x="871" y="462.1" width="15" height="1.9" fill="#ffffff"/><rect x="911" y="453" width="14" height="1.9" fill="#ffffff"/><rect x="916" y="456.1" width="9" height="1.9" fill="#ffffff"/><rect x="916" y="459.1" width="9" height="1.9" fill="#ffffff"/><rect x="911" y="462.1" width="14" height="1.9" fill="#ffffff"/><path d="M911 456 L914.5 459 L911 462 Z" fill="#ffffff"/><rect x="950" y="453" width="15" height="1.9" fill="#ffffff"/><rect x="955" y="456.1" width="10" height="1.9" fill="#ffffff"/><rect x="955" y="459.1" width="10" height="1.9" fill="#ffffff"/><rect x="950" y="462.1" width="15" height="1.9" fill="#ffffff"/><path d="M953.5 456 L950 459 L953.5 462 Z" fill="#ffffff"/><g fill="none" stroke="#ffffff" stroke-width="1.9"><rect x="385.5" y="497.6" width="6.2" height="6" rx="2.6" transform="rotate(45 388.6 500.6)"/><rect x="391.2" y="503.3" width="6.2" height="6" rx="2.6" transform="rotate(45 394.3 506.3)"/></g><path d="M390.4 502.8 L392.3 504.5" stroke="#ffffff" stroke-width="1.6"/><g fill="none" stroke="#ffffff" stroke-width="1.8" stroke-linejoin="round" stroke-linecap="round"><path d="M431.2 500.6 L428.9 498.3 Q428 497.6 427 498 L426.2 498.6 Q425.4 499.6 426 500.6 L428.6 503.4"/><path d="M430.8 506 L433.1 508.3 Q434 509 435 508.6 L435.8 508 Q436.6 507 436 506 L433.4 503.2"/></g><g stroke="#ffffff" stroke-width="1.1"><path d="M432.6 496.8 L432.9 499 M435 498.9 L436.6 497.5 M435.6 501.3 L438 501.3"/><path d="M429.4 509.8 L429.1 507.6 M427 507.7 L425.4 509.1 M426.4 505.3 L424 505.3"/></g><rect x="464.1" y="497.8" width="12.7" height="12.2" rx="0.8" fill="#ffffff"/><rect x="466.2" y="502" width="8.6" height="3.8" fill="#7aa6e0"/><g fill="#2a5ea8"><rect x="467.2" y="502.2" width="1" height="1"/><rect x="469.5" y="502.2" width="1" height="1"/><rect x="471.5" y="502.2" width="1" height="1"/><rect x="469.5" y="504.8" width="1" height="1"/></g><path d="M508.3 501 L504.6 504.4 L508.3 507.8 M512 501 L515.7 504.4 L512 507.8" fill="none" stroke="#ffffff" stroke-width="2.6" stroke-linejoin="miter"/><path d="M543 497.6 L553 501.2 L550.6 503.3 L556.3 508.9 L554.6 510.6 L548.9 504.9 L546.8 507.4 Z" fill="#ffffff"/><rect x="582.9" y="497.7" width="12.7" height="12.1" fill="none" stroke="#ffffff" stroke-width="2.1"/><path d="M623 500.8 C623 498.6 625.5 497.6 628.8 497.6 C632 497.6 634 498.6 634 500.8 L634 501.6 L623 501.6 Z" fill="#ffffff"/><path d="M627 499.4 Q628.8 497.8 630.6 499.4" stroke="#2a80e0" stroke-width="0.9" fill="none"/><path d="M624.3 502.9 L633.4 502.9 L632.6 510 Q632.4 511 631.2 511 L626.4 511 Q625.2 511 625 510 Z" fill="#ffffff"/><rect x="674" y="498.7" width="12.8" height="10.3" fill="none" stroke="#ffffff" stroke-width="1.9"/><circle cx="676.9" cy="502" r="1.25" fill="#ffffff"/><path d="M675.6 508.2 L677.6 505.6 L679.5 505.2 L682.3 501.8 L685 505.2 L685 508.2 Z" fill="#ffffff"/><circle cx="720.1" cy="503.9" r="5.4" fill="none" stroke="#ffffff" stroke-width="1.6"/><rect x="717.2" y="501.2" width="1.8" height="1.7" fill="#ffffff"/><rect x="721.2" y="501.2" width="1.8" height="1.7" fill="#ffffff"/><path d="M717.3 505.4 Q720.1 508.8 722.9 505.4" fill="none" stroke="#ffffff" stroke-width="1.3"/><text x="752.6" y="509.1" font-family="Liberation Sans" font-size="13" font-weight="bold" font-style="normal" fill="#ffffff" >x</text><text x="760.9" y="510.9" font-family="Liberation Sans" font-size="8.6" font-weight="bold" font-style="normal" fill="#ffffff" >2</text><text x="792.6" y="509.3" font-family="Liberation Sans" font-size="13" font-weight="bold" font-style="normal" fill="#ffffff" >x</text><text x="800.7" y="504" font-family="Liberation Sans" font-size="8.6" font-weight="bold" font-style="normal" fill="#ffffff" >2</text><rect x="832.9" y="502.1" width="12.2" height="2.9" fill="#ffffff"/><text x="871.2" y="500.9" font-family="Liberation Sans" font-size="5.4" font-weight="bold" font-style="normal" fill="#ffffff" >1</text><text x="871" y="505.6" font-family="Liberation Sans" font-size="5.4" font-weight="bold" font-style="normal" fill="#ffffff" >2</text><text x="871" y="510.6" font-family="Liberation Sans" font-size="5.4" font-weight="bold" font-style="normal" fill="#ffffff" >3</text><rect x="875" y="498.9" width="11" height="2" fill="#ffffff"/><rect x="875" y="503" width="11" height="2" fill="#ffffff"/><rect x="875" y="507.1" width="11" height="2" fill="#ffffff"/><circle cx="912.4" cy="500.5" r="1.65" fill="#ffffff"/><circle cx="912.4" cy="504.5" r="1.65" fill="#ffffff"/><circle cx="912.4" cy="508.5" r="1.65" fill="#ffffff"/><rect x="914.8" y="499.9" width="10.400000000000091" height="2" fill="#ffffff"/><rect x="914.8" y="503.9" width="10.400000000000091" height="2" fill="#ffffff"/><rect x="914.8" y="507.6" width="10.400000000000091" height="2" fill="#ffffff"/><path d="M384 546.8 L389.3 542 L389.3 544.7 L393 544.7 C396.8 544.7 398.8 547.2 398.6 550.5 C398.5 552.5 398 554 397.5 554.8 L395.8 554.8 C396.3 553 396.5 551.5 395.8 550.3 C395 549.3 394 549 392.5 549 L389.3 549 L389.3 551.5 Z" fill="#ffffff"/><path d="M438.00 546.8 L432.70 542 L432.70 544.7 L429.00 544.7 C425.20 544.7 423.20 547.2 423.40 550.5 C423.50 552.5 424.00 554 424.50 554.8 L426.20 554.8 C425.70 553 425.50 551.5 426.20 550.3 C427.00 549.3 428.00 549 429.50 549 L432.70 549 L432.70 551.5 Z" fill="#ffffff"/><path d="M476.8 542.8 h7.6 l4 4 v8.6 h-11.6 z" fill="none" stroke="#ffffff" stroke-width="1.6"/><path d="M484 542.5 L484 547 L488.8 547 Z" fill="#ffffff"/><path d="M481 548.6 L479.3 550.5 L481 552.4 M484.2 548.6 L485.9 550.5 L484.2 552.4 M483.3 548 L481.9 553" fill="none" stroke="#ffffff" stroke-width="1.1"/><circle cx="534.25" cy="549.45" r="6.2" fill="none" stroke="#ffffff" stroke-width="1.9"/><text x="531.3" y="553" font-family="Liberation Sans" font-size="9.5" font-weight="bold" fill="#ffffff">?</text></svg>
<div class="a" style="left:1081px;top:78px;width:15px;height:722px;background:#fafafa"></div>
<svg style="left:1084px;top:88px" width="9" height="5" viewBox="0 0 9 5"><path d="M0 5 L4.5 0 L9 5Z" fill="#8a8a8a"/></svg>
<div class="a" style="left:1084px;top:101px;width:9px;height:507px;background:#8a8a8a;border-radius:4.5px"></div>
<svg style="left:1084px;top:785px" width="9" height="5" viewBox="0 0 9 5"><path d="M0 0 L4.5 5 L9 0Z" fill="#8a8a8a"/></svg>
<svg style="left:0;top:0" width="1096" height="800" viewBox="0 0 1096 800"><path d="M0 791 L0 800 L9 800 A9 9 0 0 1 0 791 Z" fill="#f6f6f6"/><path d="M0 791 A9 9 0 0 0 9 800" fill="none" stroke="#cfcfcf" stroke-width="1"/><path d="M1096 791 L1096 800 L1087 800 A9 9 0 0 0 1096 791 Z" fill="#f6f6f6"/><path d="M1096 791 A9 9 0 0 1 1087 800" fill="none" stroke="#cfcfcf" stroke-width="1"/><path d="M0.5 8 A7.5 7.5 0 0 1 8 0.5" fill="none" stroke="rgba(40,40,90,.35)" stroke-width="1"/><path d="M1088 0.5 A7.5 7.5 0 0 1 1095.5 8" fill="none" stroke="rgba(30,80,80,.35)" stroke-width="1"/></svg>
</body></html>
